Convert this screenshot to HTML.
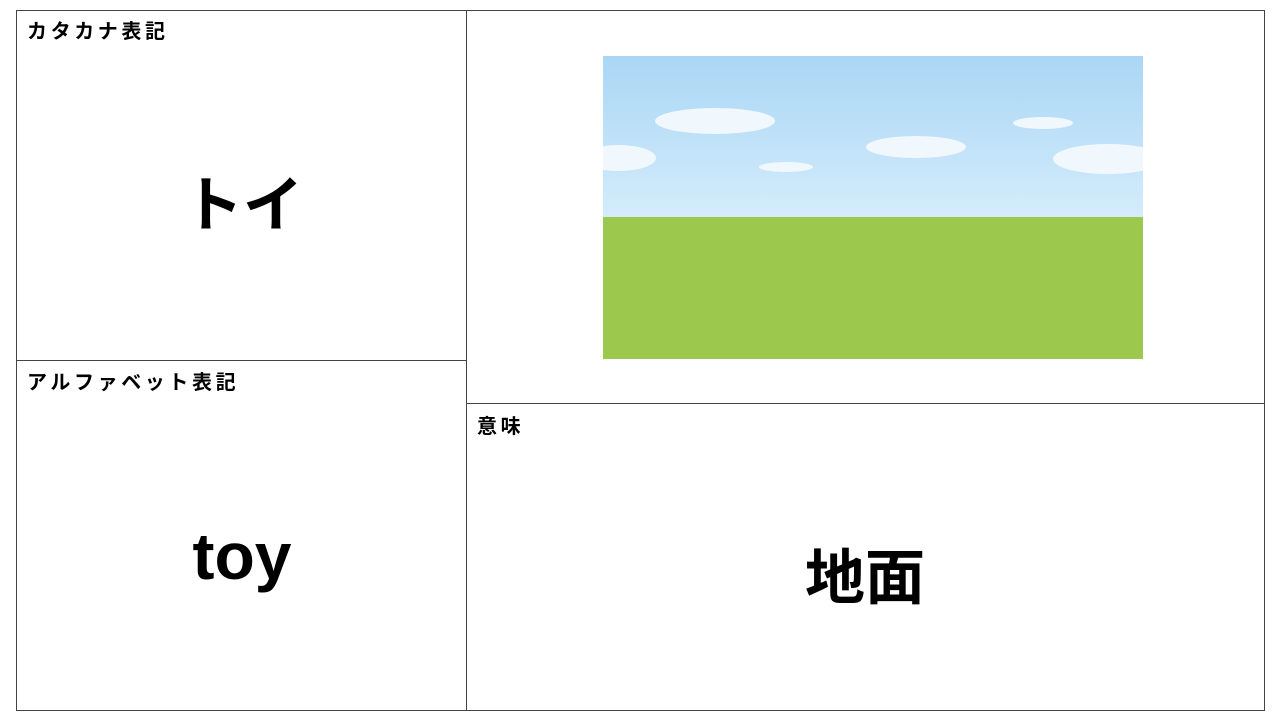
<!DOCTYPE html>
<html><head><meta charset="utf-8"><style>
body{margin:0;width:1280px;height:720px;background:#fff;position:relative;overflow:hidden;font-family:"Liberation Sans","Noto Sans CJK JP",sans-serif;}
.l{position:absolute;background:#444;}
.t{position:absolute;font-weight:bold;color:#000;white-space:nowrap;}
.s{font-size:20px;letter-spacing:3.6px;}
.b{font-size:60px;transform:translateX(-50%);}
</style></head><body>
<div class="l" style="left:16px;top:10px;width:1249px;height:1px"></div>
<div class="l" style="left:16px;top:710px;width:1249px;height:1px"></div>
<div class="l" style="left:16px;top:10px;width:1px;height:701px"></div>
<div class="l" style="left:1264px;top:10px;width:1px;height:701px"></div>
<div class="l" style="left:466px;top:10px;width:1px;height:701px"></div>
<div class="l" style="left:16px;top:360px;width:451px;height:1px"></div>
<div class="l" style="left:466px;top:403px;width:799px;height:1px"></div>
<div class="t s" style="left:27px;top:15px">カタカナ表記</div>
<div class="t s" style="left:27px;top:366px">アルファベット表記</div>
<div class="t s" style="left:477px;top:410px">意味</div>
<div class="t b" style="left:243px;top:157px">トイ</div>
<div class="t b" style="left:242px;top:518px;font-size:66px">toy</div>
<div class="t b" style="left:865px;top:530px">地面</div>
<svg style="position:absolute;left:603px;top:56px" width="540" height="303" viewBox="0 0 540 303">
<defs><linearGradient id="sk" x1="0" y1="0" x2="0" y2="1"><stop offset="0" stop-color="#aad6f5"/><stop offset="1" stop-color="#d4ecfb"/></linearGradient></defs>
<rect width="540" height="161" fill="url(#sk)"/>
<rect y="161" width="540" height="142" fill="#9cc84e"/>
<g fill="#f0f8fe">
<ellipse cx="112" cy="65" rx="60" ry="13"/>
<ellipse cx="313" cy="91" rx="50" ry="11"/>
<ellipse cx="183" cy="111" rx="27" ry="5"/>
<ellipse cx="440" cy="67" rx="30" ry="6"/>
<ellipse cx="15" cy="102" rx="38" ry="13"/>
<ellipse cx="505" cy="103" rx="55" ry="15"/>
</g>
</svg>
</body></html>
